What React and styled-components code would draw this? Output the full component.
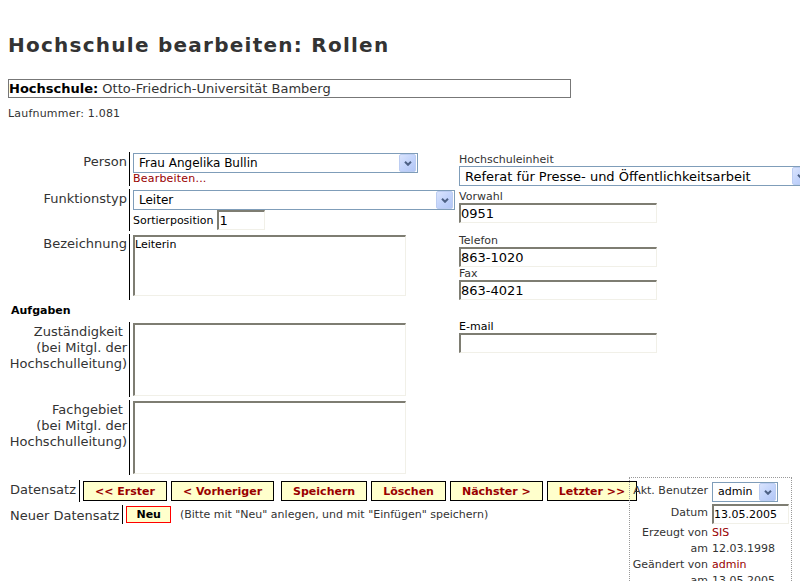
import React from "react";
import styled, { createGlobalStyle } from "styled-components";

const GlobalStyle = createGlobalStyle`
  html, body {
    margin: 0;
    padding: 0;
    overflow: hidden;
    background: #fff;
  }
  body {
    font-family: "DejaVu Sans", Verdana, sans-serif;
    color: #333;
  }
`;

const Page = styled.div`
  padding: 0 8px;
  width: 792px;
  box-sizing: border-box;
`;

const Title = styled.h1`
  margin: 33px 0 0;
  font-size: 20px;
  line-height: 24px;
  font-weight: bold;
  letter-spacing: 1.25px;
  color: #333;
  white-space: nowrap;
`;

const UniBox = styled.div`
  margin-top: 22px;
  width: 563px;
  box-sizing: border-box;
  border: 1px solid #777;
  font-size: 13px;
  line-height: 17px;
  color: #333;
  white-space: nowrap;

  b {
    color: #000;
  }
`;

const RunNo = styled.div`
  margin-top: 9px;
  font-size: 11px;
  line-height: 13px;
  letter-spacing: 0.2px;
  color: #333;
`;

const FormArea = styled.div`
  display: flex;
  gap: 4px;
  margin-top: 32px;
`;

const FormGrid = styled.div`
  display: grid;
  grid-template-columns: 121px 326px;
  row-gap: 3px;
  width: 447px;
  flex-shrink: 0;
`;

const Label = styled.div`
  text-align: right;
  padding: 2px 2px 0 0;
  font-size: 13px;
  line-height: 16px;
  color: #333;
  white-space: nowrap;
`;

const Cell = styled.div`
  border-left: 1px solid #000;
  padding: 1px 0 1px 3px;
`;

const SectionHead = styled.div`
  grid-column: 1 / -1;
  height: 16px;
  padding-left: 3px;
  font-size: 11px;
  font-weight: bold;
  line-height: 16px;
  color: #000;
`;

const SelectBox = styled.div`
  display: flex;
  align-items: center;
  width: ${(p) => p.$w}px;
  height: 20px;
  box-sizing: border-box;
  border: 1px solid #7f9db9;
  background: #fff;
  padding: 0 1px 0 5px;
  font-size: ${(p) => p.$fs}px;
  color: #000;
  flex-shrink: 0;
`;

const SelectText = styled.span`
  flex: 1;
  white-space: nowrap;
  overflow: hidden;
`;

const ArrowBtn = styled.span`
  display: flex;
  align-items: center;
  justify-content: center;
  width: 15px;
  height: 16px;
  border: 1px solid #bccdf2;
  border-radius: 2px;
  background: linear-gradient(135deg, #dae4fd 0%, #c3d4fb 50%, #b2c6f6 100%);
  flex-shrink: 0;
`;

const EditLink = styled.div`
  font-size: 11px;
  line-height: 12px;
  letter-spacing: 0.2px;
  color: #990000;
`;

const InlineRow = styled.div`
  display: flex;
  align-items: center;
  gap: 4px;
  font-size: 11px;
  color: #000;
`;

const TextInput = styled.input`
  display: block;
  box-sizing: border-box;
  width: ${(p) => p.$w}px;
  height: 20px;
  margin: 0;
  padding: 0;
  border-style: solid;
  border-width: 2px 1px 1px 2px;
  border-color: #7e7d72 #f1f0e8 #f1f0e8 #7e7d72;
  background: #fff;
  font-family: "DejaVu Sans", Verdana, sans-serif;
  font-size: ${(p) => p.$fs || 13}px;
  color: #000;
  outline: none;
`;

const TextArea = styled.textarea`
  display: block;
  box-sizing: border-box;
  width: 273px;
  height: ${(p) => p.$h}px;
  margin: 0 0 ${(p) => p.$mb || 0}px;
  padding: 1px 0 0;
  border-style: solid;
  border-width: 2px 1px 1px 2px;
  border-color: #7e7d72 #f1f0e8 #f1f0e8 #7e7d72;
  background: #fff;
  font-family: "DejaVu Sans", Verdana, sans-serif;
  font-size: 11px;
  line-height: 14px;
  color: #000;
  resize: none;
  outline: none;
  overflow: hidden;
`;

const RightCol = styled.div`
  display: flex;
  flex-direction: column;
  flex-shrink: 0;
`;

const FieldBlock = styled.div`
  margin-top: ${(p) => p.$mt || 0}px;
`;

const SmallLabel = styled.div`
  font-size: 11px;
  line-height: 13px;
  color: ${(p) => (p.$dark ? "#000" : "#333")};
`;

const Bottom = styled.div`
  display: flex;
  align-items: flex-start;
  margin-top: 2px;
`;

const NavArea = styled.div`
  width: 621px;
  flex-shrink: 0;
  padding-top: 3px;
  display: flex;
  flex-direction: column;
  gap: 3px;
`;

const NavRow = styled.div`
  display: flex;
  align-items: flex-start;
`;

const NavLabel = styled.div`
  padding: ${(p) => p.$pt}px 3px 0 2px;
  font-size: 13px;
  line-height: 16px;
  color: #333;
  white-space: nowrap;
`;

const NavCell = styled.div`
  display: flex;
  align-items: center;
  gap: ${(p) => p.$gap}px;
  border-left: 1px solid #000;
  padding: 1px 0 1px 3px;
  white-space: nowrap;
`;

const NavButton = styled.button`
  height: ${(p) => (p.$small ? 17 : 20)}px;
  margin: 0 0 0 ${(p) => p.$ml || 0}px;
  padding: 0 ${(p) => (p.$small ? 9 : 11)}px;
  border: 1px solid ${(p) => (p.$small ? "#ff0000" : "#000")};
  background: #ffffcc;
  font-family: "DejaVu Sans", Verdana, sans-serif;
  font-size: 11px;
  font-weight: bold;
  color: ${(p) => (p.$small ? "#000" : "#990000")};
  white-space: nowrap;
  flex-shrink: 0;
`;

const Hint = styled.span`
  margin-left: 4px;
  font-size: 11px;
  color: #333;
`;

const InfoPanel = styled.div`
  width: 164px;
  height: 140px;
  box-sizing: border-box;
  border: 1px dotted #999;
  padding: 4px 3px 0 2px;
  display: grid;
  grid-template-columns: 76px 76px;
  column-gap: 4px;
  align-content: start;
  position: relative;
  z-index: 1;
`;

const InfoLabel = styled.div`
  text-align: right;
  font-size: 11px;
  line-height: 16px;
  color: #333;
  white-space: nowrap;
  padding-top: ${(p) => p.$pt || 0}px;
`;

const InfoValue = styled.div`
  font-size: 11px;
  line-height: 16px;
  white-space: nowrap;
  color: ${(p) => (p.$red ? "#990000" : "#333")};
  margin-bottom: ${(p) => p.$mb || 0}px;
`;

function Chevron() {
  return (
    <svg width="8" height="5" viewBox="0 0 8 5">
      <path d="M1 0.8 L4 3.8 L7 0.8" stroke="#4d6185" strokeWidth="2" fill="none" />
    </svg>
  );
}

function Select({ w, fs = 12, children }) {
  return (
    <SelectBox $w={w} $fs={fs}>
      <SelectText>{children}</SelectText>
      <ArrowBtn>
        <Chevron />
      </ArrowBtn>
    </SelectBox>
  );
}

export default function App() {
  return (
    <Page>
      <GlobalStyle />
      <Title>Hochschule bearbeiten: Rollen</Title>
      <UniBox>
        <b>Hochschule:</b> Otto-Friedrich-Universität Bamberg
      </UniBox>
      <RunNo>Laufnummer: 1.081</RunNo>

      <FormArea>
        <FormGrid>
          <Label>Person</Label>
          <Cell>
            <Select w={285}>Frau Angelika Bullin</Select>
            <EditLink>Bearbeiten...</EditLink>
          </Cell>

          <Label>Funktionstyp</Label>
          <Cell>
            <Select w={322}>Leiter</Select>
            <InlineRow>
              Sortierposition
              <TextInput $w={48} defaultValue="1" />
            </InlineRow>
          </Cell>

          <Label>Bezeichnung</Label>
          <Cell>
            <TextArea $h={61} $mb={3} defaultValue="Leiterin" />
          </Cell>

          <SectionHead>Aufgaben</SectionHead>

          <Label>
            Zuständigkeit&nbsp;
            <br />
            (bei Mitgl. der
            <br />
            Hochschulleitung)
          </Label>
          <Cell>
            <TextArea $h={73} />
          </Cell>

          <Label>
            Fachgebiet&nbsp;
            <br />
            (bei Mitgl. der
            <br />
            Hochschulleitung)
          </Label>
          <Cell>
            <TextArea $h={73} />
          </Cell>
        </FormGrid>

        <RightCol>
          <FieldBlock $mt={1}>
            <SmallLabel>Hochschuleinheit</SmallLabel>
            <Select w={352} fs={13}>Referat für Presse- und Öffentlichkeitsarbeit</Select>
          </FieldBlock>
          <FieldBlock $mt={4}>
            <SmallLabel>Vorwahl</SmallLabel>
            <TextInput $w={198} defaultValue="0951" />
          </FieldBlock>
          <FieldBlock $mt={11}>
            <SmallLabel>Telefon</SmallLabel>
            <TextInput $w={198} defaultValue="863-1020" />
          </FieldBlock>
          <FieldBlock>
            <SmallLabel>Fax</SmallLabel>
            <TextInput $w={198} defaultValue="863-4021" />
          </FieldBlock>
          <FieldBlock $mt={20}>
            <SmallLabel $dark>E-mail</SmallLabel>
            <TextInput $w={198} defaultValue="" />
          </FieldBlock>
        </RightCol>
      </FormArea>

      <Bottom>
        <NavArea>
          <NavRow>
            <NavLabel $pt={2}>Datensatz</NavLabel>
            <NavCell $gap={4}>
              <NavButton>&lt;&lt; Erster</NavButton>
              <NavButton>&lt; Vorheriger</NavButton>
              <NavButton $ml={3}>Speichern</NavButton>
              <NavButton>Löschen</NavButton>
              <NavButton>Nächster &gt;</NavButton>
              <NavButton>Letzter &gt;&gt;</NavButton>
            </NavCell>
          </NavRow>
          <NavRow>
            <NavLabel $pt={3}>Neuer Datensatz</NavLabel>
            <NavCell $gap={5}>
              <NavButton $small>Neu</NavButton>
              <Hint>(Bitte mit "Neu" anlegen, und mit "Einfügen" speichern)</Hint>
            </NavCell>
          </NavRow>
        </NavArea>

        <InfoPanel>
          <InfoLabel $pt={1}>Akt. Benutzer</InfoLabel>
          <InfoValue $mb={2}>
            <Select w={66} fs={11}>admin</Select>
          </InfoValue>
          <InfoLabel $pt={1}>Datum</InfoLabel>
          <InfoValue $mb={1}>
            <TextInput $w={77} $fs={11} defaultValue="13.05.2005" />
          </InfoValue>
          <InfoLabel>Erzeugt von</InfoLabel>
          <InfoValue $red>SIS</InfoValue>
          <InfoLabel>am</InfoLabel>
          <InfoValue>12.03.1998</InfoValue>
          <InfoLabel>Geändert von</InfoLabel>
          <InfoValue $red>admin</InfoValue>
          <InfoLabel>am</InfoLabel>
          <InfoValue>13.05.2005</InfoValue>
        </InfoPanel>
      </Bottom>
    </Page>
  );
}
